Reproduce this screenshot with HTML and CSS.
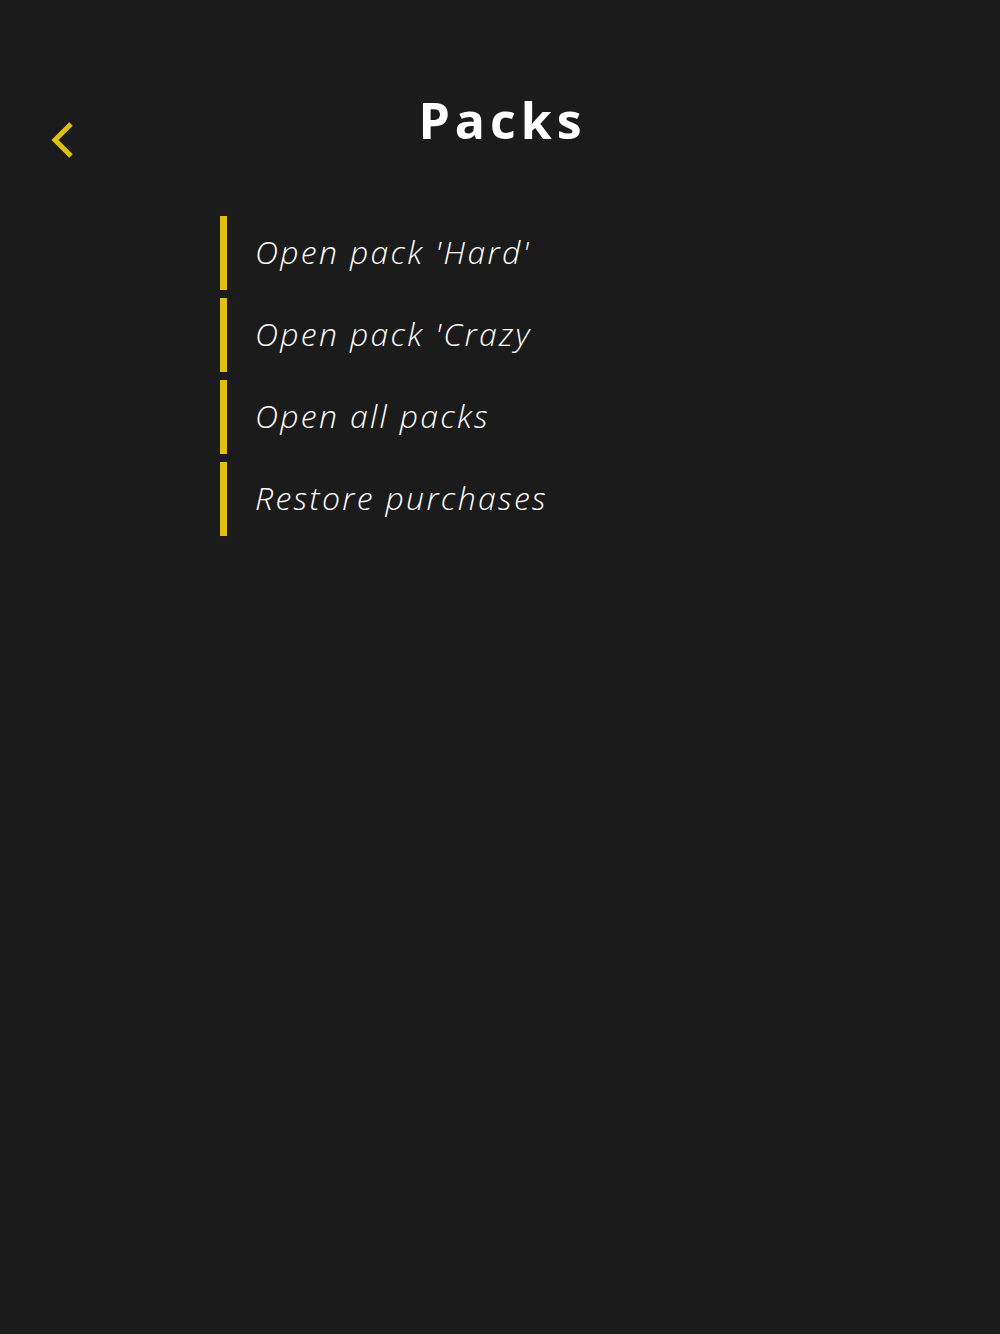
FILE: index.html
```html
<!DOCTYPE html>
<html>
<head>
<meta charset="utf-8">
<link rel="stylesheet" href="styles.css">
</head>
<body>
<div class="screen">
  <header class="header">
    <button class="back" aria-label="Back">
      <svg width="26" height="40" viewBox="0 0 26 40"><polyline points="20,3 4,19 20,35" fill="none" stroke="#e2c00f" stroke-width="5" stroke-linecap="butt" stroke-linejoin="miter"/></svg>
    </button>
    <h1 class="title">Packs</h1>
  </header>
  <ul class="menu">
    <li class="item">Open pack 'Hard'</li>
    <li class="item">Open pack 'Crazy</li>
    <li class="item">Open all packs</li>
    <li class="item">Restore purchases</li>
  </ul>
</div>
</body>
</html>
```
FILE: styles.css
```css
html, body {
  margin: 0;
  padding: 0;
  background: #1b1b1b;
}
.screen {
  width: 1000px;
  height: 1334px;
  background: #1b1b1b;
  font-family: "Open Sans", "Noto Sans", sans-serif;
  color: #ffffff;
}
.header {
  position: relative;
  height: 216px;
  display: flex;
  justify-content: center;
}
.back {
  position: absolute;
  left: 51px;
  top: 121px;
  padding: 0;
  margin: 0;
  border: 0;
  background: none;
  width: 26px;
  height: 40px;
}
.back svg { display: block; }
.title {
  margin: 0;
  margin-top: 86px;
  padding-left: 5px;
  font-size: 50px;
  line-height: 68px;
  font-weight: 700;
  letter-spacing: 5px;
  height: 68px;
}
.menu {
  list-style: none;
  margin: 0;
  padding: 0 0 0 220px;
  display: flex;
  flex-direction: column;
  gap: 8px;
}
.item {
  height: 74px;
  border-left: 7px solid #e2c00f;
  padding-left: 28px;
  padding-bottom: 3px;
  box-sizing: border-box;
  display: flex;
  align-items: center;
  font-style: italic;
  font-weight: 300;
  font-size: 32px;
  letter-spacing: 2.3px;
}
```
